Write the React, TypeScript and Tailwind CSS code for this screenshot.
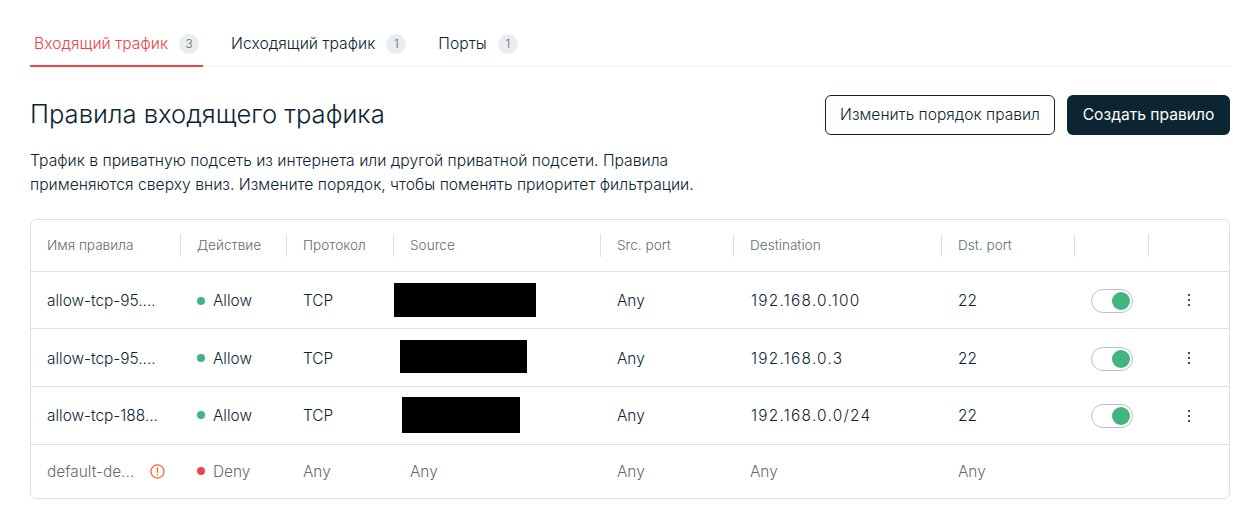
const font = "font-['Inter','Noto_Sans',sans-serif]"

type Rule = {
  name: string
  destination: string
  boxClass: string
  rowClass: string
  cell: string
}

const columns = 'grid grid-cols-[150px_106px_107px_207px_133px_208px_133px_74px_1fr]'
const cell = 'px-[16px] pt-[2px]'
const lowCell = 'px-[16px] pt-0'

const rules: Rule[] = [
  { name: 'allow-tcp-95....', destination: '192.168.0.100', boxClass: 'ml-0 h-[34px] w-[142px]', rowClass: 'h-[57px]', cell },
  { name: 'allow-tcp-95....', destination: '192.168.0.3', boxClass: '-mt-[2px] ml-[6px] h-[33px] w-[127px]', rowClass: 'h-[58px]', cell },
  { name: 'allow-tcp-188...', destination: '192.168.0.0/24', boxClass: '-mt-[2px] ml-[8px] h-[36px] w-[118px]', rowClass: 'h-[58px]', cell: lowCell },
]

const headers = ['Имя правила', 'Действие', 'Протокол', 'Source', 'Src. port', 'Destination', 'Dst. port', '', '']

function Tab({ label, count, active }: { label: string; count: number; active?: boolean }) {
  return (
    <div
      className={`-mb-px flex h-[44px] items-center gap-[11px] border-b-2 px-[4px] pb-[1px] ${
        active ? 'border-[#ef4444] text-[#ef4444]' : 'border-transparent text-[#0c2533]'
      }`}
    >
      <span className="text-[15.7px] leading-5 font-light">{label}</span>
      <span className="flex h-[20px] w-[20px] items-center justify-center rounded-full bg-[#e9edf0] text-[12px] font-light text-[#5c6b75]">
        {count}
      </span>
    </div>
  )
}

function Toggle() {
  return (
    <div className="flex h-[24px] w-[42px] items-center justify-end rounded-full border border-[#b9c0c5] bg-white pr-[2px]">
      <div className="h-[18px] w-[18px] rounded-full bg-[#41b57f]" />
    </div>
  )
}

function Dots() {
  return (
    <svg width="16" height="16" viewBox="0 0 16 16" className="text-[#0c2533]">
      <circle cx="8" cy="3" r="1.1" fill="currentColor" />
      <circle cx="8" cy="8" r="1.1" fill="currentColor" />
      <circle cx="8" cy="13" r="1.1" fill="currentColor" />
    </svg>
  )
}

function Warning() {
  return (
    <svg width="15" height="15" viewBox="0 0 15 15" fill="none" className="text-[#f0653a]">
      <circle cx="7.5" cy="7.5" r="6.6" stroke="currentColor" strokeWidth="1.3" />
      <path d="M7.5 3.8v4.6" stroke="currentColor" strokeWidth="1.4" strokeLinecap="round" />
      <circle cx="7.5" cy="10.8" r="0.85" fill="currentColor" />
    </svg>
  )
}

export default function App() {
  return (
    <div className={`${font} min-h-[525px] bg-white pt-[23px] pr-[26px] pl-[30px] text-[#0c2533]`}>
      <div className="flex gap-[24px] border-b border-[#eceef0]">
        <Tab label="Входящий трафик" count={3} active />
        <Tab label="Исходящий трафик" count={1} />
        <Tab label="Порты" count={1} />
      </div>

      <div className="mt-[28px] flex items-start justify-between">
        <h1 className="mt-[3px] text-[25.6px] leading-8 font-light">Правила входящего трафика</h1>
        <div className="flex gap-[12px]">
          <button className="h-[40px] w-[230px] rounded-[6px] border border-[#0c2533] text-[15.6px] font-light">
            Изменить порядок правил
          </button>
          <button className="h-[40px] w-[163px] rounded-[6px] bg-[#0c2533] text-[15.6px] text-white">
            Создать правило
          </button>
        </div>
      </div>

      <p className="mt-[14px] w-[680px] text-[15.7px] leading-[24px] font-light text-[#0c2533]">
        Трафик в приватную подсеть из интернета или другой приватной подсети. Правила применяются сверху вниз.
        Измените порядок, чтобы поменять приоритет фильтрации.
      </p>

      <div className="mt-[22px] overflow-hidden rounded-[6px] border border-[#dcdfe3] text-[15.4px] font-light">
        <div className={`${columns} h-[52px] items-center border-b border-[#dcdfe3] text-[13.6px] text-[#5f6d76]`}>
          {headers.map((header, i) => (
            <div
              key={i}
              className={`flex h-[23px] items-center px-[16px] ${i < 8 ? 'border-r border-[#dcdfe3]' : ''}`}
            >
              {header}
            </div>
          ))}
        </div>

        {rules.map((rule, i) => (
          <div key={i} className={`${columns} ${rule.rowClass} items-center border-b border-[#dcdfe3]`}>
            <div className={`${rule.cell} whitespace-nowrap`}>{rule.name}</div>
            <div className={`${rule.cell} flex items-center gap-[8px]`}>
              <span className="h-[8px] w-[8px] rounded-full bg-[#41b57f]" />
              <span>Allow</span>
            </div>
            <div className={rule.cell}>TCP</div>
            <div>
              <div className={`bg-black ${rule.boxClass}`} />
            </div>
            <div className={rule.cell}>Any</div>
            <div className={`${rule.cell} pl-[17px] tracking-[1.25px]`}>{rule.destination}</div>
            <div className={rule.cell}>22</div>
            <div className={rule.cell}>
              <Toggle />
            </div>
            <div className="flex pl-[32px]">
              <Dots />
            </div>
          </div>
        ))}

        <div className={`${columns} h-[53px] items-center text-[#5f6d76]`}>
          <div className={`${lowCell} flex items-center gap-[16px] whitespace-nowrap`}>
            <span>default-de...</span>
            <Warning />
          </div>
          <div className={`${lowCell} flex items-center gap-[8px]`}>
            <span className="h-[8px] w-[8px] rounded-full bg-[#ef4444]" />
            <span>Deny</span>
          </div>
          <div className={lowCell}>Any</div>
          <div className={lowCell}>Any</div>
          <div className={lowCell}>Any</div>
          <div className={lowCell}>Any</div>
          <div className={lowCell}>Any</div>
        </div>
      </div>
    </div>
  )
}
